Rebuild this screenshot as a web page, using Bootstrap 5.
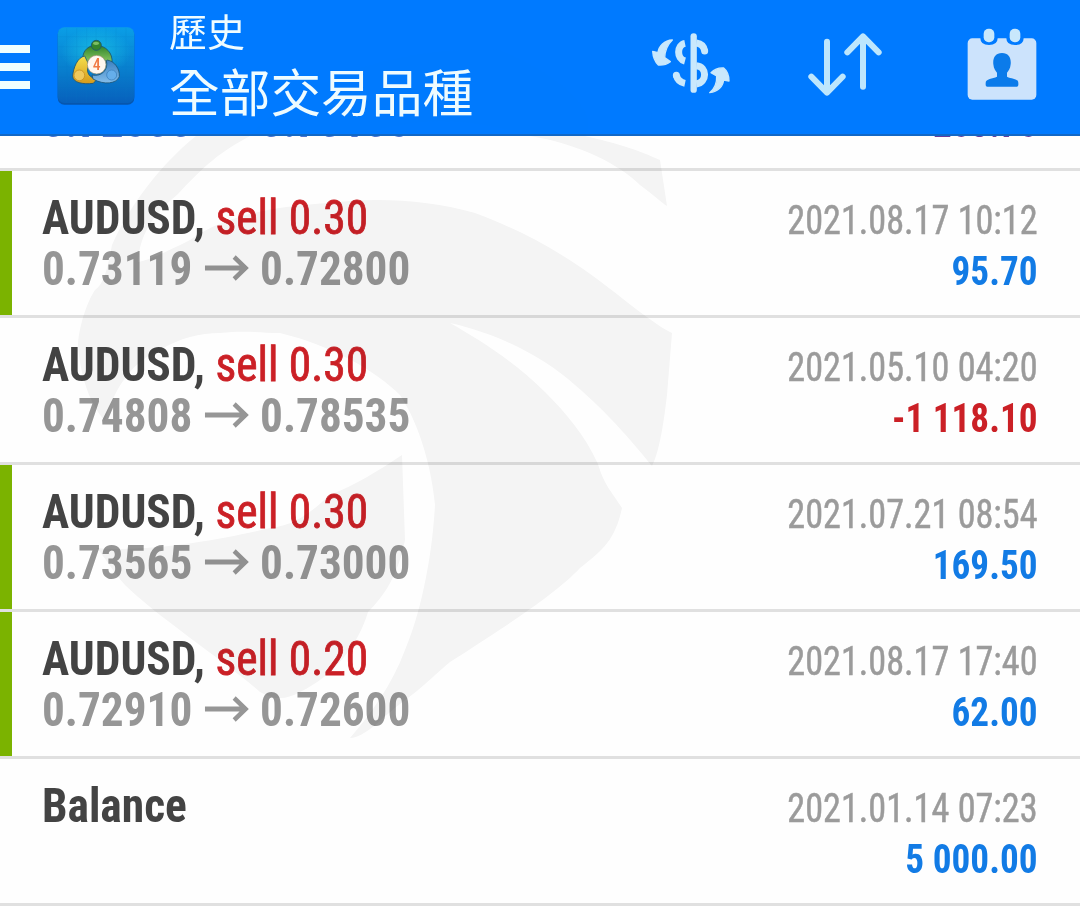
<!DOCTYPE html>
<html lang="zh-Hant">
<head>
    <meta charset="UTF-8">
    <meta name="viewport" content="width=device-width, initial-scale=1">
    <title>歷史</title>
    <link href="https://cdn.jsdelivr.net/npm/bootstrap@5.3.2/dist/css/bootstrap.min.css" rel="stylesheet">
    <style>
        body { font-family: "Roboto Condensed", Roboto, sans-serif; font-stretch: 75%; height: 906px; background: #fefefe; }

        .topbar { height: 136px; background: #007aff; border-bottom: 2px solid #1268c6; z-index: 1; font-family: "Noto Sans CJK TC", sans-serif; color: #effcff; }
        .topbar .sub { font-size: 38px; line-height: 50px; }
        .topbar .main { font-size: 50.7px; line-height: 66px; margin-top: 2px; }
        .titles { margin-left: 29px; padding-top: 5px; }
        .menu-btn { width: 30px; height: 44px; margin-top: 45px; }
        .menu-btn span { height: 8px; background: #f0ffff; }
        .logo { margin: 20px 0 0 20px; }
        .tools { gap: 57px; margin: 20px 25px 0 0; }

        .swirl { z-index: 2; mix-blend-mode: multiply; }

        .history { margin-top: -112px; }
        .deal { height: 147px; padding: 21px 42px 0; border-bottom: 3px solid #e0e0e0; }
        .deal.win::before { content: ""; position: absolute; left: 0; top: 0; width: 12px; height: 144px; background: #7bb300; }
        .name, .price { font-size: 48px; line-height: 51px; font-weight: 700; color: #434343; transform: scaleX(.942); transform-origin: left; white-space: nowrap; }
        .name { transform: scaleX(.947); }
        .name .side { font-weight: 400; color: #cb2026; -webkit-text-stroke: .8px #cb2026; }
        .price { color: #969696; }
        .time, .sum { font-size: 40px; line-height: 51px; color: #9b9b9b; transform: scaleX(.905); transform-origin: right; }
        .time { -webkit-text-stroke: .5px #9b9b9b; }
        .stamp { padding-top: 3px; }
        .sum { font-weight: 700; color: #127be5; transform: scaleX(.93); }
        .sum.loss { color: #cb2026; }
        .arrow { width: 50px; height: 26px; margin: -6px 11px 0 11px; vertical-align: 4px; }
        .scrolled { padding-top: 20px; }
        .scrolled .price { color: #4e73cf; }
        .scrolled .sum { color: #693c9c; }
    </style>
</head>
<body class="overflow-hidden position-relative">
<svg class="d-none">
    <symbol id="arrow" viewBox="0 0 46 26"><path d="M0 13h43M31 2l12 11-12 11" fill="none" stroke="#969696" stroke-width="4.8"/></symbol>
</svg>

<header class="topbar d-flex align-items-start position-relative">
    <div class="menu-btn d-flex flex-column justify-content-between"><span></span><span></span><span></span></div>
    <svg class="logo" width="90" height="90" viewBox="0 0 270 270">
        <defs>
            <linearGradient id="tile" x1="0" y1="0" x2="0" y2="1"><stop offset="0" stop-color="#0a9ee6"/><stop offset=".55" stop-color="#087fce"/><stop offset="1" stop-color="#0760bc"/></linearGradient>
            <radialGradient id="glow"><stop offset="0" stop-color="#1cc8e4" stop-opacity=".75"/><stop offset="1" stop-color="#1cc8e4" stop-opacity="0"/></radialGradient>
            <linearGradient id="green" x1="0" y1="0" x2="0" y2="1"><stop offset="0" stop-color="#2c8128"/><stop offset="1" stop-color="#8cc963"/></linearGradient>
            <linearGradient id="gold" x1="0" y1="0" x2="0" y2="1"><stop offset="0" stop-color="#f5e04c"/><stop offset="1" stop-color="#d59a1c"/></linearGradient>
            <linearGradient id="blue" x1="0" y1="0" x2="0" y2="1"><stop offset="0" stop-color="#3a7fc0"/><stop offset="1" stop-color="#83bdea"/></linearGradient>
        </defs>
        <rect x="23" y="24" width="230" height="230" rx="20" fill="#0656ae"/>
        <rect x="23" y="22" width="230" height="227" rx="20" fill="url(#tile)"/>
        <ellipse cx="138" cy="95" rx="105" ry="72" fill="url(#glow)"/>
        <path d="M50 24v223M80 24v223M110 24v223M138 24v223M168 24v223M198 24v223M228 24v223M25 50h226M25 80h226M25 110h226M25 140h226M25 170h226M25 200h226M25 228h226" stroke="#0879c0" stroke-width="1.5" opacity=".3"/>
        <g stroke="#1c5374" stroke-width="2.5">
            <path d="M100 124c-6-24 8-46 37-49 31 2 52 24 49 53l-15 1c-8-19-43-22-52-2z" fill="url(#green)"/>
            <path d="M104 108c-22 4-34 36-36 60 0 20 31 26 62 22l12-13c-24-2-37-22-25-42z" fill="url(#gold)"/>
            <path d="M171 120c23 3 39 27 37 50-8 21-46 26-79 7l-3-12c30 6 50-17 43-43z" fill="url(#blue)"/>
            <circle cx="139" cy="76" r="15" fill="#34852c"/>
            <circle cx="88" cy="166" r="16" fill="#f0c95b" stroke="#c99226"/>
            <circle cx="185" cy="165" r="15" fill="#65aeea" stroke="#3d83c0"/>
        </g>
        <ellipse cx="138" cy="70" rx="9" ry="5" fill="#9ed57e" opacity=".7"/>
        <circle cx="140" cy="134" r="28" fill="#fff7ef" stroke="#9b8b6b" stroke-width="2"/>
        <text x="140" y="151" text-anchor="middle" font-family="Roboto, sans-serif" font-size="47" font-weight="500" fill="#f07a45">4</text>
    </svg>
    <div class="titles">
        <div class="sub">歷史</div>
        <div class="main">全部交易品種</div>
    </div>
    <div class="tools d-flex ms-auto">
        <svg width="100" height="90" viewBox="0 0 300 270" fill="none" stroke="#c9e8fc" stroke-width="21">
            <path d="M158 49v160" stroke-width="19" stroke-linecap="round"/>
            <path d="M132 70c-25 5-26 46 0 53M106 166c3 12 11 21 26 24"/>
            <path d="M106 166v.1M191 93v.1" stroke-linecap="round"/>
            <path d="M166 69c14 2 23 11 25 24M166 137c33 3 33 50 0 55"/>
            <path d="M94 60c-24 1-41 18-43 38l-16-4c1 16 8 33 17 41 13 1 27-3 36-10l-17-12c1-20 6-37 23-53zM206 218c23-3 39-17 42-38l16 3c0-16-6-31-16-39-14-1-28 4-38 14l17 10c1 23-4 37-21 50z" fill="#c9e8fc" stroke="#c9e8fc" stroke-width="4" stroke-linejoin="round"/>
        </svg>
        <svg width="100" height="90" viewBox="-3 0 300 270" fill="none" stroke="#bde6fd" stroke-width="18" stroke-linecap="round" stroke-linejoin="round">
            <path d="M84 65v150M37 170l47 48 47-48M192 200V50M145 97l47-48 47 48"/>
        </svg>
        <svg width="100" height="90" viewBox="0 0 300 270">
            <rect x="38" y="55" width="206" height="184" rx="14" fill="#cce3fc"/>
            <path d="M76 40h52v14q0 21-26 21t-26-21zM154 40h52v14q0 21-26 21t-26-21z" fill="#007aff"/>
            <rect x="86" y="26" width="32" height="41" rx="15" fill="#c8e8fc"/>
            <rect x="164" y="26" width="32" height="41" rx="15" fill="#c8e8fc"/>
            <path d="M141 99c20 0 28 15 26 34-1 13-7 20-11 25v12c13 7 34 5 34 19v6q0 5-5 5H97q-5 0-5-5v-6c0-14 21-12 34-19v-12c-4-5-10-12-11-25-2-19 6-34 26-34z" fill="#0b7bea"/>
        </svg>
    </div>
</header>

<main class="history">
    <div class="deal scrolled position-relative d-flex justify-content-between">
        <div>
            <div class="name">&nbsp;</div>
            <div class="price">0.72500<svg class="arrow"><use href="#arrow"/></svg>0.73105</div>
        </div>
        <div class="stamp text-end">
            <div class="time">&nbsp;</div>
            <div class="sum">203.70</div>
        </div>
    </div>
    <div class="deal win position-relative d-flex justify-content-between">
        <div>
            <div class="name">AUDUSD, <span class="side">sell 0.30</span></div>
            <div class="price">0.73119<svg class="arrow"><use href="#arrow"/></svg>0.72800</div>
        </div>
        <div class="stamp text-end">
            <div class="time">2021.08.17 10:12</div>
            <div class="sum">95.70</div>
        </div>
    </div>
    <div class="deal position-relative d-flex justify-content-between">
        <div>
            <div class="name">AUDUSD, <span class="side">sell 0.30</span></div>
            <div class="price">0.74808<svg class="arrow"><use href="#arrow"/></svg>0.78535</div>
        </div>
        <div class="stamp text-end">
            <div class="time">2021.05.10 04:20</div>
            <div class="sum loss">-1 118.10</div>
        </div>
    </div>
    <div class="deal win position-relative d-flex justify-content-between">
        <div>
            <div class="name">AUDUSD, <span class="side">sell 0.30</span></div>
            <div class="price">0.73565<svg class="arrow"><use href="#arrow"/></svg>0.73000</div>
        </div>
        <div class="stamp text-end">
            <div class="time">2021.07.21 08:54</div>
            <div class="sum">169.50</div>
        </div>
    </div>
    <div class="deal win position-relative d-flex justify-content-between">
        <div>
            <div class="name">AUDUSD, <span class="side">sell 0.20</span></div>
            <div class="price">0.72910<svg class="arrow"><use href="#arrow"/></svg>0.72600</div>
        </div>
        <div class="stamp text-end">
            <div class="time">2021.08.17 17:40</div>
            <div class="sum">62.00</div>
        </div>
    </div>
    <div class="deal position-relative d-flex justify-content-between">
        <div>
            <div class="name">Balance</div>
        </div>
        <div class="stamp text-end">
            <div class="time">2021.01.14 07:23</div>
            <div class="sum">5 000.00</div>
        </div>
    </div>
</main>

<!-- watermark over the list -->
<svg class="swirl position-absolute top-0 start-0 pe-none" width="1080" height="906" viewBox="0 0 1080 906" fill="#f5f5f5">
    <path d="M196 136C160 165 130 205 112 245C108 265 105 283 95 290C88 300 79 325 78 345C80 375 90 405 105 421C115 385 135 360 160 350C180 338 200 333 220 333C245 330 260 333 280 333C330 345 375 370 400 395C420 425 432 470 435 505C432 560 420 615 405 650C392 685 370 715 350 738C365 738 385 715 400 704C420 690 440 670 450 662C500 630 555 595 580 568C603 550 615 540 622 508C612 492 604 485 598 464C585 435 565 412 545 392C515 362 480 340 450 323C500 334 545 358 575 385C610 415 635 445 652 466C660 450 664 420 667 395L672 333C655 325 625 300 605 285C560 250 515 228 475 213C430 200 375 197 330 203C275 206 225 215 190 240C170 250 150 260 138 262C140 235 152 215 178 194C205 165 220 152 250 136z"/>
    <path d="M402 455L405 540C398 575 385 595 368 612C358 645 335 675 300 692C285 700 275 700 260 692C230 665 155 615 125 585C112 570 103 555 97 548C150 553 230 538 270 528C300 525 318 505 330 495C355 485 380 470 402 455z"/>
    <path d="M530 136C580 144 620 165 640 185C655 196 662 203 667 206L660 160C625 144 600 140 585 136z"/>
    <path d="M250 136C290 90 380 45 500 50C560 75 600 110 585 136H530C470 118 420 115 360 136z" opacity=".12"/>
</svg>

<script src="https://cdn.jsdelivr.net/npm/bootstrap@5.3.2/dist/js/bootstrap.bundle.min.js"></script>
</body>
</html>
